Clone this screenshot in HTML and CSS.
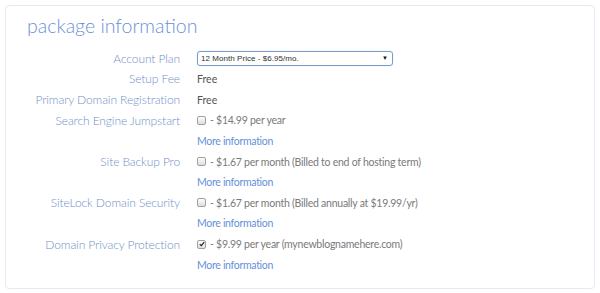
FILE: index.html
```html
<!DOCTYPE html>
<html>
<head>
<meta charset="utf-8">
<link rel="stylesheet" href="styles.css">
</head>
<body>
<div class="card">
  <h2 class="title">package information</h2>
  <div class="grid">
    <div class="label">Account Plan</div>
    <div class="value"><div class="select"><span>12 Month Price - $6.95/mo.</span><span class="arrow">&#9660;</span></div></div>

    <div class="label">Setup Fee</div>
    <div class="value">Free</div>

    <div class="label">Primary Domain Registration</div>
    <div class="value">Free</div>

    <div class="label">Search Engine Jumpstart</div>
    <div class="value light"><span class="cb"></span> - $14.99 per year</div>
    <div class="label"></div>
    <div class="value"><a class="more">More information</a></div>

    <div class="label">Site Backup Pro</div>
    <div class="value light"><span class="cb"></span> - $1.67 per month (Billed to end of hosting term)</div>
    <div class="label"></div>
    <div class="value"><a class="more">More information</a></div>

    <div class="label">SiteLock Domain Security</div>
    <div class="value light"><span class="cb"></span> - $1.67 per month (Billed annually at $19.99/yr)</div>
    <div class="label"></div>
    <div class="value"><a class="more">More information</a></div>

    <div class="label">Domain Privacy Protection</div>
    <div class="value light"><span class="cb checked"><svg viewBox="0 0 8 8" width="6" height="6"><path d="M1 4.2 L3 6.2 L7 1.5" fill="none" stroke="#222" stroke-width="1.6"/></svg></span> - $9.99 per year (mynewblognamehere.com)</div>
    <div class="label"></div>
    <div class="value"><a class="more">More information</a></div>
  </div>
</div>
</body>
</html>
```

FILE: styles.css
```css
html, body {
  margin: 0;
  padding: 0;
  background: #ffffff;
}
body {
  font-family: Lato, "Open Sans", sans-serif;
  width: 600px;
  height: 293px;
  overflow: hidden;
}
.card {
  margin: 5px 0 0 5px;
  width: 588px;
  height: 282px;
  border: 1px solid #e2ebf6;
  border-radius: 4px;
  box-sizing: content-box;
}
.title {
  margin: 0;
  height: 40px;
  padding: 2px 0 0 21px;
  font-size: 19.5px;
  font-weight: 300;
  line-height: 36px;
  color: #6d8fd8;
}
.grid {
  display: grid;
  grid-template-columns: 174px 1fr;
  column-gap: 17px;
  grid-auto-rows: 20.65px;
  align-items: center;
}
.label {
  text-align: right;
  font-size: 12px;
  letter-spacing: -0.1px;
  color: #7290c8;
  font-weight: 300;
  white-space: nowrap;
}
.value {
  font-size: 10.5px;
  color: #555;
  display: flex;
  align-items: center;
  white-space: nowrap;
}
.value.light {
  color: #7a7a7a;
  letter-spacing: -0.25px;
}
.cb {
  display: inline-flex;
  align-items: center;
  justify-content: center;
  width: 7px;
  height: 7px;
  border: 1px solid #a0a0a0;
  border-radius: 2px;
  background: linear-gradient(#fdfdfd, #dedede);
  margin-right: 4px;
}
.more {
  color: #6590da;
  font-size: 10.5px;
  letter-spacing: -0.3px;
  font-weight: 400;
}
.select {
  display: flex;
  align-items: center;
  justify-content: space-between;
  box-sizing: border-box;
  width: 196px;
  height: 15px;
  border: 1px solid #7a9ad0;
  border-radius: 3px;
  padding: 0 4px 0 3px;
  font-family: "Liberation Sans", Arial, sans-serif;
  font-size: 8px;
  letter-spacing: 0.05px;
  color: #333;
  box-shadow: 0 0 1px #a8c0ea;
}
.arrow {
  font-size: 6px;
  color: #111;
}
```
